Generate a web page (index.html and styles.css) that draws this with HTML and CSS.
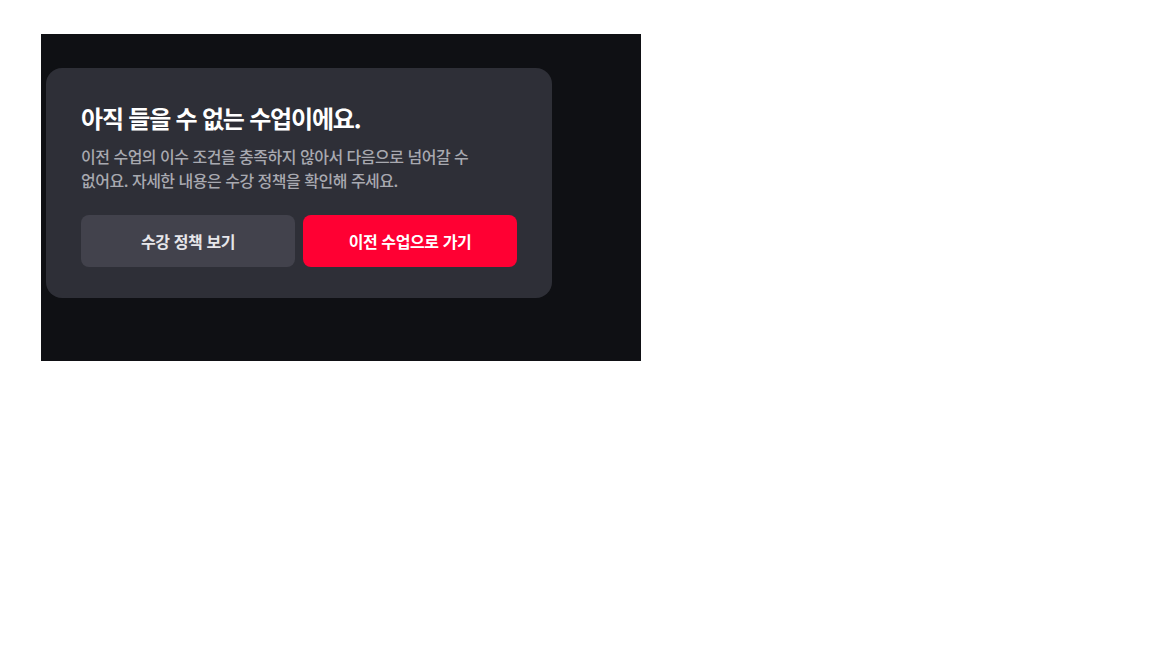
FILE: index.html
```html
<!DOCTYPE html>
<html lang="ko">
<head>
<meta charset="utf-8">
<link rel="stylesheet" href="styles.css">
</head>
<body>
<div class="stage">
  <div class="dialog">
    <h2 class="title">아직 들을 수 없는 수업이에요.</h2>
    <p class="desc">이전 수업의 이수 조건을 충족하지 않아서 다음으로 넘어갈 수 없어요. 자세한 내용은 수강 정책을 확인해 주세요.</p>
    <div class="actions">
      <button class="btn btn-secondary">수강 정책 보기</button>
      <button class="btn btn-primary">이전 수업으로 가기</button>
    </div>
  </div>
</div>
</body>
</html>
```
FILE: styles.css
```css
html, body { margin: 0; padding: 0; background: #ffffff; }
body {
  font-family: "Noto Sans CJK KR", "Noto Sans", sans-serif;
}
.stage {
  margin: 34px 0 0 41px;
  width: 600px;
  height: 327px;
  box-sizing: border-box;
  padding: 34px 0 0 5px;
  background: #0f1014;
}
.dialog {
  width: 506px;
  height: 230px;
  box-sizing: border-box;
  padding: 34px 35px 0 35px;
  background: #2e2f37;
  border-radius: 16px;
}
.title {
  margin: 0;
  font-size: 24px;
  line-height: 32px;
  font-weight: 700;
  color: #ffffff;
  letter-spacing: -1.2px;
}
.desc {
  margin: 10px 0 0 0;
  max-width: 400px;
  font-size: 16px;
  line-height: 24px;
  font-weight: 500;
  color: #a8a9b0;
  letter-spacing: -0.5px;
}
.actions {
  display: flex;
  gap: 8px;
  margin-top: 23px;
}
.btn {
  flex: 1;
  height: 52px;
  border: none;
  border-radius: 8px;
  font-family: inherit;
  font-size: 16px;
  font-weight: 700;
  letter-spacing: -0.4px;
  color: #ffffff;
  padding: 0;
}
.btn-secondary { background: #42424c; color: #e6e6ea; }
.btn-primary { background: #ff0033; }
```
